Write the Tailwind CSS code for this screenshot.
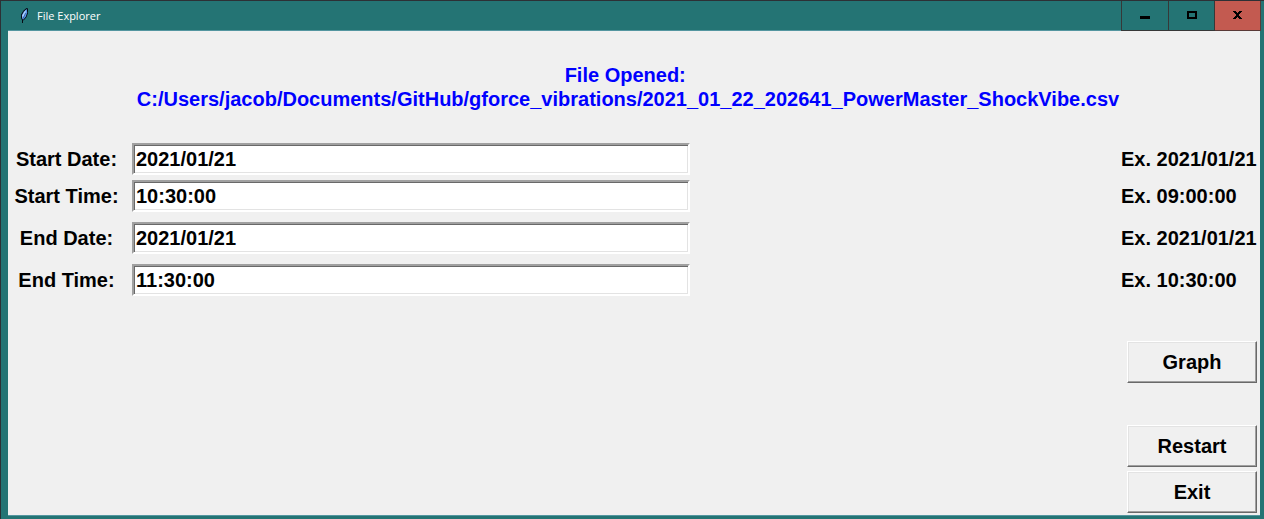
<!DOCTYPE html>
<html lang="en">
<head>
<meta charset="utf-8">
<title>File Explorer</title>
<script src="https://cdn.jsdelivr.net/npm/@tailwindcss/browser@4"></script>
</head>
<body class="flex min-h-screen flex-col border-t border-l border-[#2d3035] bg-[#247474] pr-1 pb-[3px] pl-[7px] font-['Liberation_Sans',Arial,sans-serif] text-xl font-bold text-black">
  <header class="-mr-1 flex h-[30px] shrink-0 items-stretch bg-[#247474] pr-[3px]">
    <div class="flex flex-1 items-center border-b border-[#5496a0] pl-2">
      <svg class="h-[15px] w-4" viewBox="0 0 16 15" aria-hidden="true">
        <path d="M10.5 0 L12 0.5 L12 5 L10.5 9 L8 12 L7 12.5 L7 15 L6 15 L6 12 L5 10 L5 6.5 L7.5 2.5 Z" fill="#070b14"/>
        <path d="M10.8 1 L11.2 4.5 L9.8 8.5 L7.5 11.5 L6.2 11 L5.9 7 L8 3.5 Z" fill="#5b96ec"/>
        <path d="M10.2 1.8 L8.2 4 L6.3 7.5 L6.5 10 L9 6 Z" fill="#b4d6ff"/>
        <path d="M9.5 5 L6.8 11" fill="none" stroke="#1b3f80" stroke-width="0.6"/>
      </svg>
      <h1 class="pl-[5px] font-['Open_Sans','Segoe_UI',sans-serif] text-[11px] leading-4 font-normal text-white">File Explorer</h1>
    </div>
    <button type="button" aria-label="Minimize" class="flex w-12 items-center justify-center border-x border-b border-[#363838]">
      <svg class="h-[15px] w-4" viewBox="0 0 16 15"><path d="M3 8h10v3H3z"/></svg>
    </button>
    <button type="button" aria-label="Maximize" class="flex w-[46px] items-center justify-center border-r border-b border-[#363838]">
      <svg class="h-[15px] w-[15px]" viewBox="0 0 15 15"><path fill-rule="evenodd" d="M3 3h10v8H3zM5 5v4h6V5z"/></svg>
    </button>
    <button type="button" aria-label="Close" class="flex w-[46px] items-center justify-center border-r border-b border-[#5a3a38] bg-[#c35a50]">
      <svg class="h-[15px] w-[15px]" viewBox="0 0 15 15"><path d="M3 3h3v1h1v1h1v-1h1v-1h3v1h-1v1h-1v1h-1v2h1v1h1v1h1v1h-3v-1h-1v-1h-1v1h-1v1h-3v-1h1v-1h1v-1h1v-2h-1v-1h-1v-1h-1z"/></svg>
    </button>
  </header>

  <main class="flex flex-1 flex-col border-b border-[#5496a0] bg-[#f0f0f0]">
    <p class="pt-8 pr-3 text-center leading-6 text-[#0000ff]">File Opened:&nbsp;<br>C:/Users/jacob/Documents/GitHub/gforce_vibrations/2021_01_22_202641_PowerMaster_ShockVibe.csv</p>

    <form class="flex flex-1 flex-col pt-8">
      <div class="flex items-center">
        <label for="start-date" class="w-[117px] text-center">Start Date:</label>
        <input id="start-date" type="text" value="2021/01/21" class="ml-[7px] h-8 w-[558px] border-2 border-t-[#a0a0a0] border-r-white border-b-white border-l-[#a0a0a0] bg-white px-0.5 shadow-[inset_1px_1px_0_#696969,inset_-1px_-1px_0_#e3e3e3] outline-none">
        <span class="ml-auto w-[139px]">Ex. 2021/01/21</span>
      </div>
      <div class="mt-[5px] flex items-center">
        <label for="start-time" class="w-[117px] text-center">Start Time:</label>
        <input id="start-time" type="text" value="10:30:00" class="ml-[7px] h-8 w-[558px] border-2 border-t-[#a0a0a0] border-r-white border-b-white border-l-[#a0a0a0] bg-white px-0.5 shadow-[inset_1px_1px_0_#696969,inset_-1px_-1px_0_#e3e3e3] outline-none">
        <span class="ml-auto w-[139px]">Ex. 09:00:00</span>
      </div>
      <div class="mt-2.5 flex items-center">
        <label for="end-date" class="w-[117px] text-center">End Date:</label>
        <input id="end-date" type="text" value="2021/01/21" class="ml-[7px] h-8 w-[558px] border-2 border-t-[#a0a0a0] border-r-white border-b-white border-l-[#a0a0a0] bg-white px-0.5 shadow-[inset_1px_1px_0_#696969,inset_-1px_-1px_0_#e3e3e3] outline-none">
        <span class="ml-auto w-[139px]">Ex. 2021/01/21</span>
      </div>
      <div class="mt-2.5 flex items-center">
        <label for="end-time" class="w-[117px] text-center">End Time:</label>
        <input id="end-time" type="text" value="11:30:00" class="ml-[7px] h-8 w-[558px] border-2 border-t-[#a0a0a0] border-r-white border-b-white border-l-[#a0a0a0] bg-white px-0.5 shadow-[inset_1px_1px_0_#696969,inset_-1px_-1px_0_#e3e3e3] outline-none">
        <span class="ml-auto w-[139px]">Ex. 10:30:00</span>
      </div>

      <div class="flex flex-col items-end pt-[45px] pr-[3px] pb-0.5">
        <button type="button" class="h-[42px] w-[130px] border border-t-white border-r-[#696969] border-b-[#696969] border-l-white bg-[#f0f0f0] shadow-[inset_-1px_-1px_0_#a0a0a0,inset_1px_1px_0_#e3e3e3]">Graph</button>
        <button type="button" class="mt-[42px] h-[42px] w-[130px] border border-t-white border-r-[#696969] border-b-[#696969] border-l-white bg-[#f0f0f0] shadow-[inset_-1px_-1px_0_#a0a0a0,inset_1px_1px_0_#e3e3e3]">Restart</button>
        <button type="button" class="mt-1 h-[42px] w-[130px] border border-t-white border-r-[#696969] border-b-[#696969] border-l-white bg-[#f0f0f0] shadow-[inset_-1px_-1px_0_#a0a0a0,inset_1px_1px_0_#e3e3e3]">Exit</button>
      </div>
    </form>
  </main>
</body>
</html>
